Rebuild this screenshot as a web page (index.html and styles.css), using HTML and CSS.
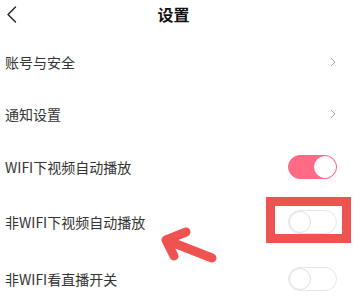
FILE: index.html
```html
<!DOCTYPE html>
<html lang="zh">
<head>
<meta charset="utf-8">
<link rel="stylesheet" href="styles.css">
</head>
<body>
<div class="page">
  <header class="topbar">
    <svg class="back" width="12" height="17" viewBox="0 0 12 17"><path d="M9.5 1 L2 8.5 L9.5 16" fill="none" stroke="#222" stroke-width="1.4" stroke-linecap="round" stroke-linejoin="round"/></svg>
    <h1 class="title">设置</h1>
  </header>
  <ul class="list">
    <li class="row r1"><span class="label">账号与安全</span><svg class="chev" width="6" height="10" viewBox="0 0 6 10"><path d="M1 1 L5 5 L1 9" fill="none" stroke="#a8a8a8" stroke-width="1"/></svg></li>
    <li class="row r2"><span class="label">通知设置</span><svg class="chev" width="6" height="10" viewBox="0 0 6 10"><path d="M1 1 L5 5 L1 9" fill="none" stroke="#a8a8a8" stroke-width="1"/></svg></li>
    <li class="row r3"><span class="label">WIFI下视频自动播放</span><span class="switch on"><span class="knob"></span></span></li>
    <li class="row r4"><span class="label">非WIFI下视频自动播放</span><span class="switch"><span class="knob"></span><span class="mark"></span></span></li>
    <li class="row r5"><span class="label">非WIFI看直播开关</span><span class="switch"><span class="knob"></span></span></li>
  </ul>
  <svg class="arrow" width="80" height="50" viewBox="0 0 80 50"><path d="M62 38 L16 20 M36 12 L16 20 L24 36" fill="none" stroke="#ef534f" stroke-width="9" stroke-linecap="round" stroke-linejoin="round"/></svg>
</div>
</body>
</html>
```
FILE: styles.css
```css
* { box-sizing: border-box; }
body {
  margin: 0;
  background: #fff;
  font-family: "Noto Sans CJK SC", "Noto Sans", sans-serif;
  color: #333;
}
.page {
  position: relative;
  width: 361px;
  height: 296px;
  overflow: hidden;
}
.topbar {
  height: 28px;
  display: flex;
  align-items: center;
  padding: 0 18px 0 6px;
}
.back { flex: none; margin-top: 1px; }
.title {
  flex: 1;
  margin: 0;
  text-align: center;
  font-size: 16px;
  font-weight: 700;
  color: #111;
  padding-right: 14px;
  line-height: 26px;
}
.list {
  list-style: none;
  margin: 8px 0 0;
  padding: 0;
}
.row {
  display: flex;
  align-items: center;
  justify-content: space-between;
  padding: 0 24px 0 5px;
  font-size: 14px;
}
.r1 { height: 52px; }
.r2 { height: 52px; }
.r3 { height: 53px; }
.r4 { height: 58px; }
.r5 { height: 56px; }
.chev { margin-right: 1px; }
.switch {
  position: relative;
  width: 49px;
  height: 24px;
  border-radius: 12px;
  border: 1px solid #e6e6e6;
  background: #fff;
}
.switch .knob {
  position: absolute;
  top: 0;
  left: 0;
  width: 22px;
  height: 22px;
  border-radius: 50%;
  background: #fff;
  border: 1px solid #e0e0e0;
}
.switch.on {
  background: #ff6a84;
  border-color: #ff6a84;
}
.switch.on .knob {
  left: auto;
  right: 0;
  border-color: #fff;
}
.mark {
  position: absolute;
  left: -23px;
  top: -14px;
  width: 85px;
  height: 46px;
  border: 9px solid #ef534f;
}
.arrow {
  position: absolute;
  left: 150px;
  top: 220px;
}
```
